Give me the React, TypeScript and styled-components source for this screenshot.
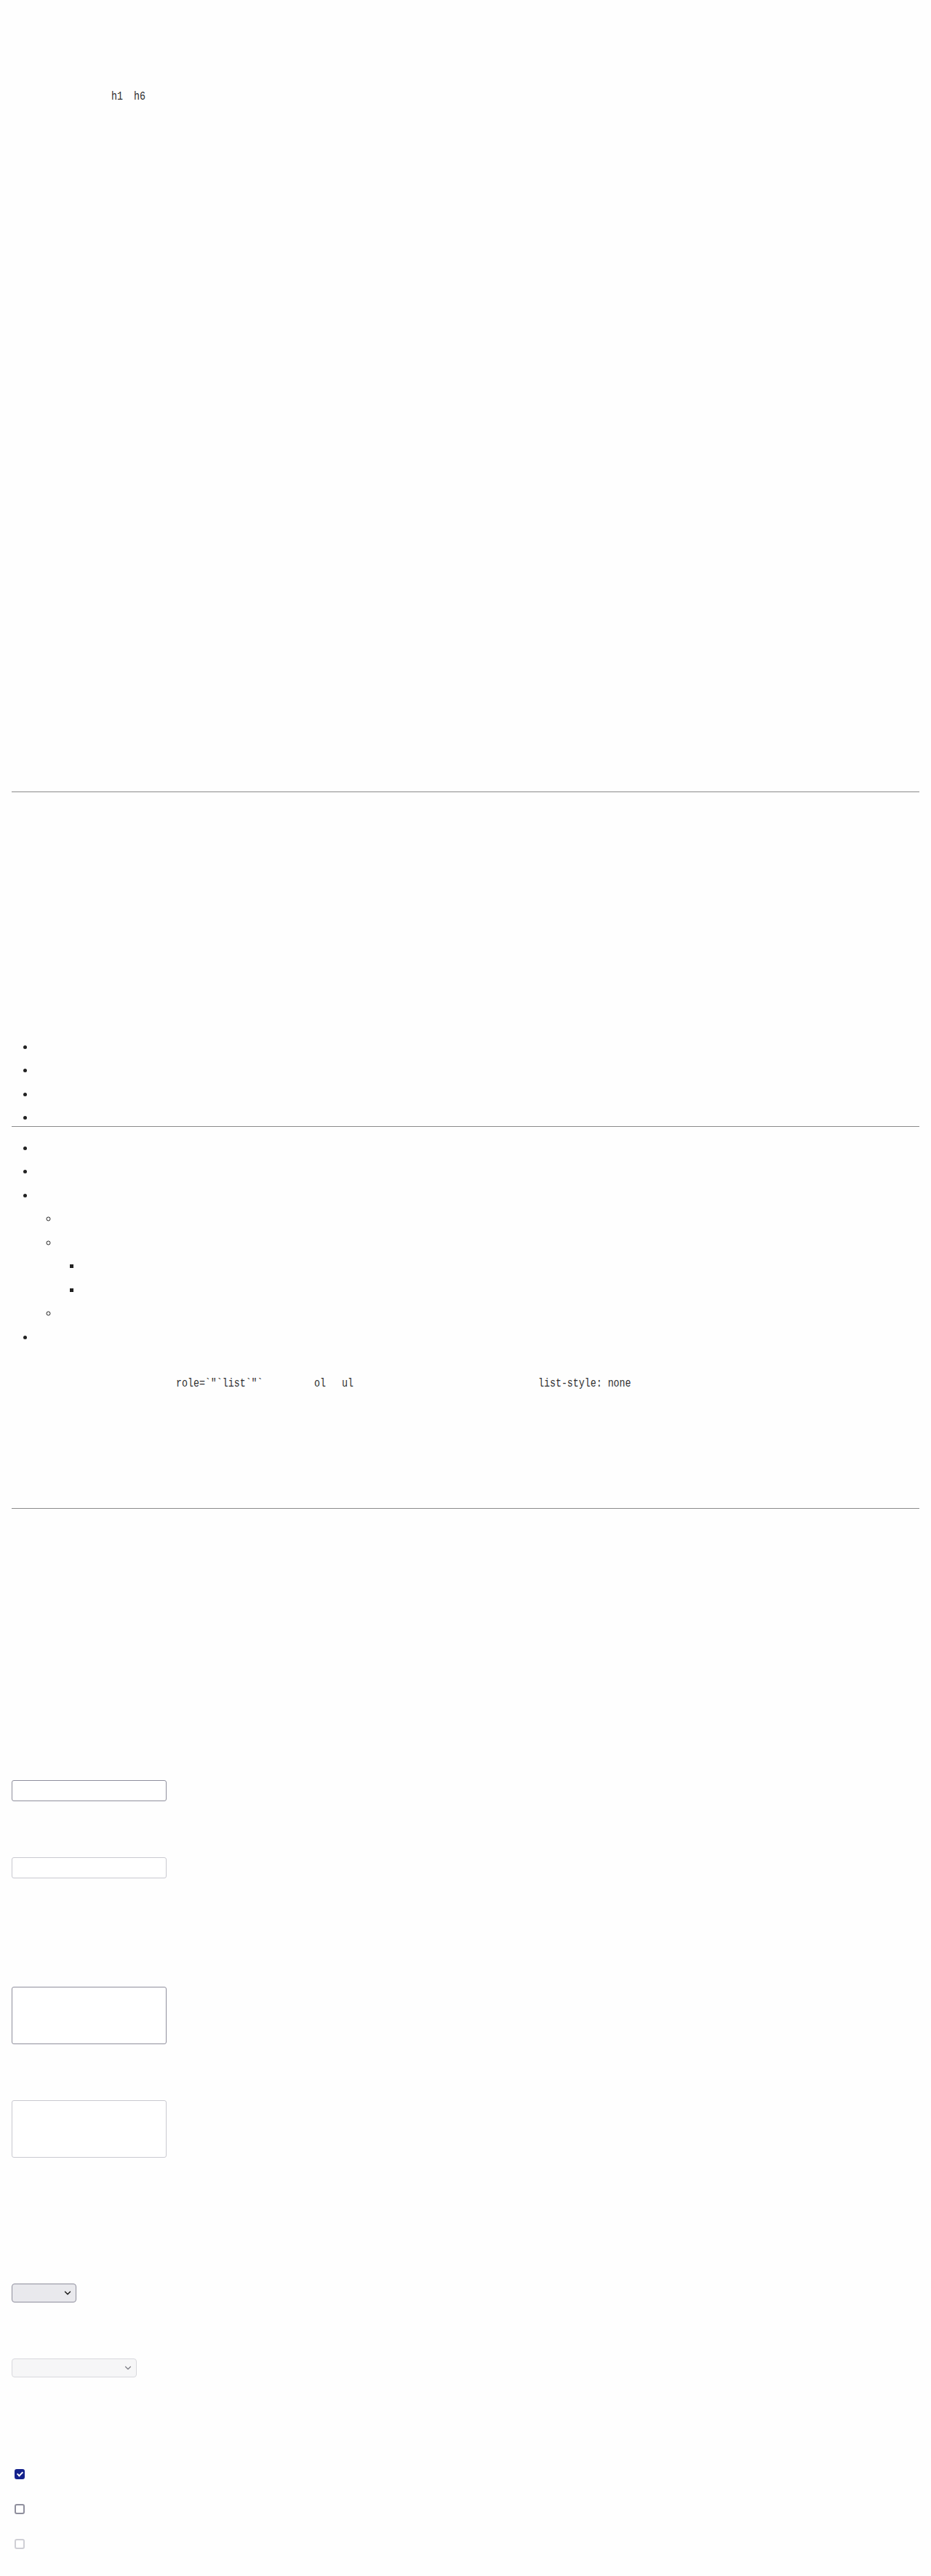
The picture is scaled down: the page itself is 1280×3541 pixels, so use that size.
import React from 'react'
import styled, { createGlobalStyle } from 'styled-components'
import { ChevronDown } from 'lucide-react'

const GlobalStyle = createGlobalStyle`
  html, body {
    margin: 0;
    padding: 0;
    background: #fefefe;
  }
  body {
    font-family: "Liberation Sans", Arial, sans-serif;
    font-size: 16px;
    color: #222;
  }
`

const App = () => {
  return (
    <>
      <GlobalStyle />
      <Page>
        <CodeLine $indent={137} $top={120}>
          <Slot $w={31}><Code>h1</Code></Slot>
          <Slot><Code>h6</Code></Slot>
        </CodeLine>

        <Rule $top={944} />

        <List $top={329}>
          <Item>&nbsp;</Item>
          <Item>&nbsp;</Item>
          <Item>&nbsp;</Item>
          <Item>&nbsp;</Item>
        </List>

        <Rule $top={0} />

        <List $top={8}>
          <Item>&nbsp;</Item>
          <Item>&nbsp;</Item>
          <Item>
            &nbsp;
            <SubList $kind="circle">
              <Item>&nbsp;</Item>
              <Item>
                &nbsp;
                <SubList $kind="square">
                  <Item>&nbsp;</Item>
                  <Item>&nbsp;</Item>
                </SubList>
              </Item>
              <Item>&nbsp;</Item>
            </SubList>
          </Item>
          <Item>&nbsp;</Item>
        </List>

        <CodeLine $indent={226} $top={39.5}>
          <Slot $w={190}><Code>role=`"`list`"`</Code></Slot>
          <Slot $w={38}><Code>ol</Code></Slot>
          <Slot $w={270}><Code>ul</Code></Slot>
          <Slot><Code>list-style: none</Code></Slot>
        </CodeLine>

        <Rule $top={159.5} />

        <TextInput $top={373} type="text" />
        <TextInput $top={77} type="text" disabled />

        <TextArea $top={149} />
        <TextArea $top={77} disabled />

        <SelectWrap $top={173} $w={89}>
          <Select><option></option></Select>
          <Chevron size={14} strokeWidth={2.5} />
        </SelectWrap>
        <SelectWrap $top={77} $w={172}>
          <Select disabled><option></option></Select>
          <Chevron size={14} strokeWidth={2} $disabled />
        </SelectWrap>

        <Check $top={126} type="checkbox" defaultChecked />
        <Check $top={34} type="checkbox" />
        <Check $top={34} type="checkbox" disabled />
      </Page>
    </>
  )
}

export default App

const Page = styled.div`
  display: flex;
  flex-direction: column;
  align-items: flex-start;
  padding: 0 16px 38px;
`

const CodeLine = styled.div<{ $indent: number; $top: number }>`
  display: flex;
  height: 24px;
  line-height: 24px;
  margin-top: ${p => p.$top}px;
  padding-left: ${p => p.$indent}px;
`

const Slot = styled.span<{ $w?: number }>`
  display: inline-block;
  flex: none;
  width: ${p => (p.$w ? `${p.$w}px` : 'auto')};
  white-space: nowrap;
`

const Code = styled.code`
  display: inline-block;
  font-family: "Liberation Mono", "DejaVu Sans Mono", monospace;
  font-size: 16px;
  line-height: 24px;
  color: #2e2e2e;
  white-space: pre;
  transform: scaleX(0.83);
  transform-origin: left center;
`

const Rule = styled.hr<{ $top: number }>`
  align-self: stretch;
  margin: ${p => p.$top}px 0 0;
  border: 0;
  border-top: 1px solid #8a8a8a;
  height: 0;
`

const List = styled.ul<{ $top: number }>`
  margin: ${p => p.$top}px 0 0;
  padding-left: 32px;
  list-style: disc;
`

const SubList = styled.ul<{ $kind: string }>`
  margin: 0;
  padding-left: 32px;
  list-style: ${p => p.$kind};
`

const Item = styled.li`
  margin-top: 8.5px;
  line-height: 24px;
  font-size: 16px;
  color: #222;
`

const TextInput = styled.input<{ $top: number }>`
  appearance: none;
  box-sizing: border-box;
  width: 213px;
  height: 29px;
  margin: ${p => p.$top}px 0 0;
  border: 1px solid #8f8f9d;
  border-radius: 3px;
  background: #fff;
  &:disabled {
    border-color: #c9c9d0;
  }
`

const TextArea = styled.textarea<{ $top: number }>`
  box-sizing: border-box;
  width: 213px;
  height: 79px;
  margin: ${p => p.$top}px 0 0;
  border: 1px solid #8f8f9d;
  border-radius: 3px;
  background: #fff;
  resize: none;
  &:disabled {
    border-color: #c9c9d0;
  }
`

const SelectWrap = styled.div<{ $top: number; $w: number }>`
  position: relative;
  width: ${p => p.$w}px;
  height: 26px;
  margin-top: ${p => p.$top}px;
`

const Select = styled.select`
  appearance: none;
  box-sizing: border-box;
  width: 100%;
  height: 26px;
  margin: 0;
  border: 1px solid #8f8f9d;
  border-radius: 4px;
  background: #e9e9ed;
  &:disabled {
    border-color: #c9c9d0;
    background: #f3f3f5;
  }
`

const Chevron = styled(ChevronDown)<{ $disabled?: boolean }>`
  position: absolute;
  right: 5px;
  top: 6px;
  color: ${p => (p.$disabled ? '#7c7c84' : '#1a1a1a')};
  pointer-events: none;
`

const Check = styled.input<{ $top: number }>`
  appearance: none;
  box-sizing: border-box;
  position: relative;
  width: 14px;
  height: 14px;
  margin: ${p => p.$top}px 0 0 4px;
  border: 2px solid #8f8f9d;
  border-radius: 3px;
  background: #fff;
  &:checked {
    border-color: #15228c;
    background: #15228c;
  }
  &:checked::after {
    content: "";
    position: absolute;
    left: 3px;
    top: 0px;
    width: 3px;
    height: 6px;
    border: solid #fff;
    border-width: 0 2px 2px 0;
    transform: rotate(45deg);
  }
  &:disabled {
    border-color: #cfcfd5;
  }
`
